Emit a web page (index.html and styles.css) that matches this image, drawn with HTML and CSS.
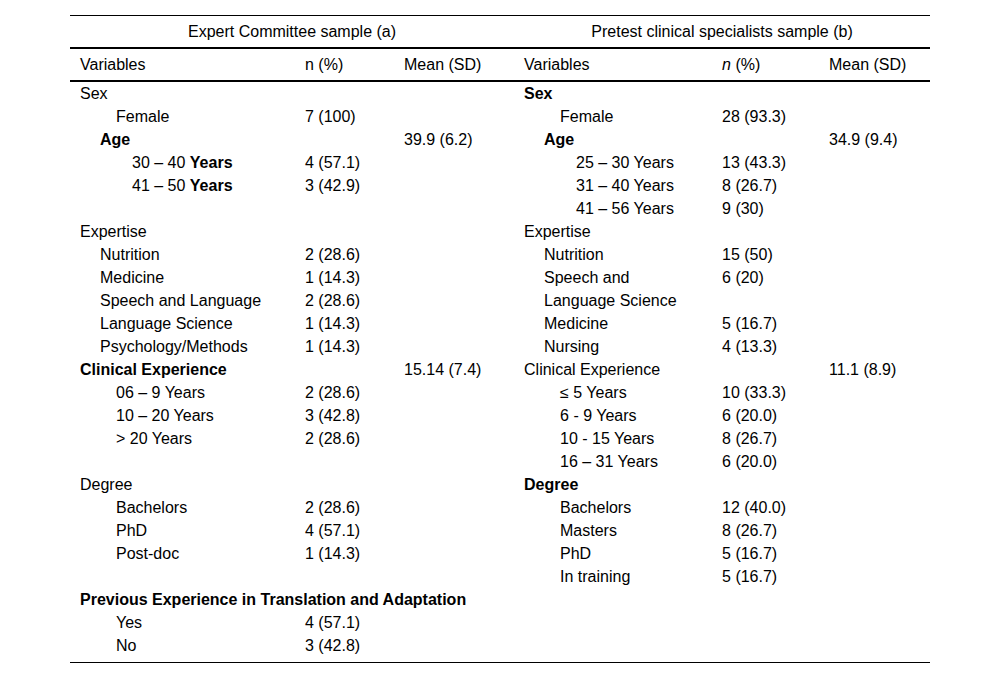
FILE: index.html
```html
<!DOCTYPE html>
<html>
<head>
<meta charset="utf-8">
<link rel="stylesheet" href="styles.css">
</head>
<body>
<table class="tbl">
  <colgroup>
    <col class="c1"><col class="c2"><col class="c3"><col class="c4"><col class="c5"><col class="c6">
  </colgroup>
  <thead>
    <tr class="group">
      <th colspan="3">Expert Committee sample (a)</th>
      <th colspan="3">Pretest clinical specialists sample (b)</th>
    </tr>
    <tr class="head">
      <th>Variables</th><th>n (%)</th><th>Mean (SD)</th>
      <th>Variables</th><th><i>n</i> (%)</th><th>Mean (SD)</th>
    </tr>
  </thead>
  <tbody>
    <tr><td>Sex</td><td></td><td></td><td><b>Sex</b></td><td></td><td></td></tr>
    <tr><td class="l2">Female</td><td>7 (100)</td><td></td><td class="l2">Female</td><td>28 (93.3)</td><td></td></tr>
    <tr><td class="l1"><b>Age</b></td><td></td><td>39.9 (6.2)</td><td class="l1"><b>Age</b></td><td></td><td>34.9 (9.4)</td></tr>
    <tr><td class="l3">30 – 40 <b>Years</b></td><td>4 (57.1)</td><td></td><td class="l3">25 – 30 Years</td><td>13 (43.3)</td><td></td></tr>
    <tr><td class="l3">41 – 50 <b>Years</b></td><td>3 (42.9)</td><td></td><td class="l3">31 – 40 Years</td><td>8 (26.7)</td><td></td></tr>
    <tr><td></td><td></td><td></td><td class="l3">41 – 56 Years</td><td>9 (30)</td><td></td></tr>
    <tr><td>Expertise</td><td></td><td></td><td>Expertise</td><td></td><td></td></tr>
    <tr><td class="l1">Nutrition</td><td>2 (28.6)</td><td></td><td class="l1">Nutrition</td><td>15 (50)</td><td></td></tr>
    <tr><td class="l1">Medicine</td><td>1 (14.3)</td><td></td><td class="l1">Speech and</td><td>6 (20)</td><td></td></tr>
    <tr><td class="l1">Speech and Language</td><td>2 (28.6)</td><td></td><td class="l1">Language Science</td><td></td><td></td></tr>
    <tr><td class="l1">Language Science</td><td>1 (14.3)</td><td></td><td class="l1">Medicine</td><td>5 (16.7)</td><td></td></tr>
    <tr><td class="l1">Psychology/Methods</td><td>1 (14.3)</td><td></td><td class="l1">Nursing</td><td>4 (13.3)</td><td></td></tr>
    <tr><td><b>Clinical Experience</b></td><td></td><td>15.14 (7.4)</td><td>Clinical Experience</td><td></td><td>11.1 (8.9)</td></tr>
    <tr><td class="l2">06 – 9 Years</td><td>2 (28.6)</td><td></td><td class="l2">≤ 5 Years</td><td>10 (33.3)</td><td></td></tr>
    <tr><td class="l2">10 – 20 Years</td><td>3 (42.8)</td><td></td><td class="l2">6 - 9 Years</td><td>6 (20.0)</td><td></td></tr>
    <tr><td class="l2">&gt; 20 Years</td><td>2 (28.6)</td><td></td><td class="l2">10 - 15 Years</td><td>8 (26.7)</td><td></td></tr>
    <tr><td></td><td></td><td></td><td class="l2">16 – 31 Years</td><td>6 (20.0)</td><td></td></tr>
    <tr><td>Degree</td><td></td><td></td><td><b>Degree</b></td><td></td><td></td></tr>
    <tr><td class="l2">Bachelors</td><td>2 (28.6)</td><td></td><td class="l2">Bachelors</td><td>12 (40.0)</td><td></td></tr>
    <tr><td class="l2">PhD</td><td>4 (57.1)</td><td></td><td class="l2">Masters</td><td>8 (26.7)</td><td></td></tr>
    <tr><td class="l2">Post-doc</td><td>1 (14.3)</td><td></td><td class="l2">PhD</td><td>5 (16.7)</td><td></td></tr>
    <tr><td></td><td></td><td></td><td class="l2">In training</td><td>5 (16.7)</td><td></td></tr>
    <tr><td colspan="3"><b>Previous Experience in Translation and Adaptation</b></td><td></td><td></td><td></td></tr>
    <tr><td class="l2">Yes</td><td>4 (57.1)</td><td></td><td></td><td></td><td></td></tr>
    <tr class="last"><td class="l2">No</td><td>3 (42.8)</td><td></td><td></td><td></td><td></td></tr>
  </tbody>
</table>
</body>
</html>
```

FILE: styles.css
```css
html, body {
  margin: 0;
  padding: 0;
  background: #fff;
}
body {
  padding: 15px 70px 0 70px;
  font-family: "Liberation Sans", Arial, sans-serif;
  font-size: 16px;
  color: #000;
}
.tbl {
  width: 860px;
  border-collapse: collapse;
  table-layout: fixed;
}
.c1 { width: 225px; }
.c2 { width: 99px; }
.c3 { width: 120px; }
.c4 { width: 198px; }
.c5 { width: 107px; }
.c6 { width: 111px; }
.tbl th, .tbl td {
  padding: 0 0 0 10px;
  line-height: 23px;
  height: 23px;
  text-align: left;
  font-weight: normal;
  white-space: nowrap;
  vertical-align: middle;
}
.tbl th i { font-style: italic; }
.group th {
  text-align: center;
  padding: 4px 0;
  border-top: 1px solid #000;
  border-bottom: 2px solid #000;
}
.head th {
  padding-top: 4px;
  padding-bottom: 4px;
  border-bottom: 2px solid #000;
}
.tbl td b { font-weight: bold; }
.tbl td.l1 { padding-left: 30px; }
.tbl td.l2 { padding-left: 46px; }
.tbl td.l3 { padding-left: 62px; }
.last td {
  padding-bottom: 5px;
  border-bottom: 1px solid #000;
}
```
